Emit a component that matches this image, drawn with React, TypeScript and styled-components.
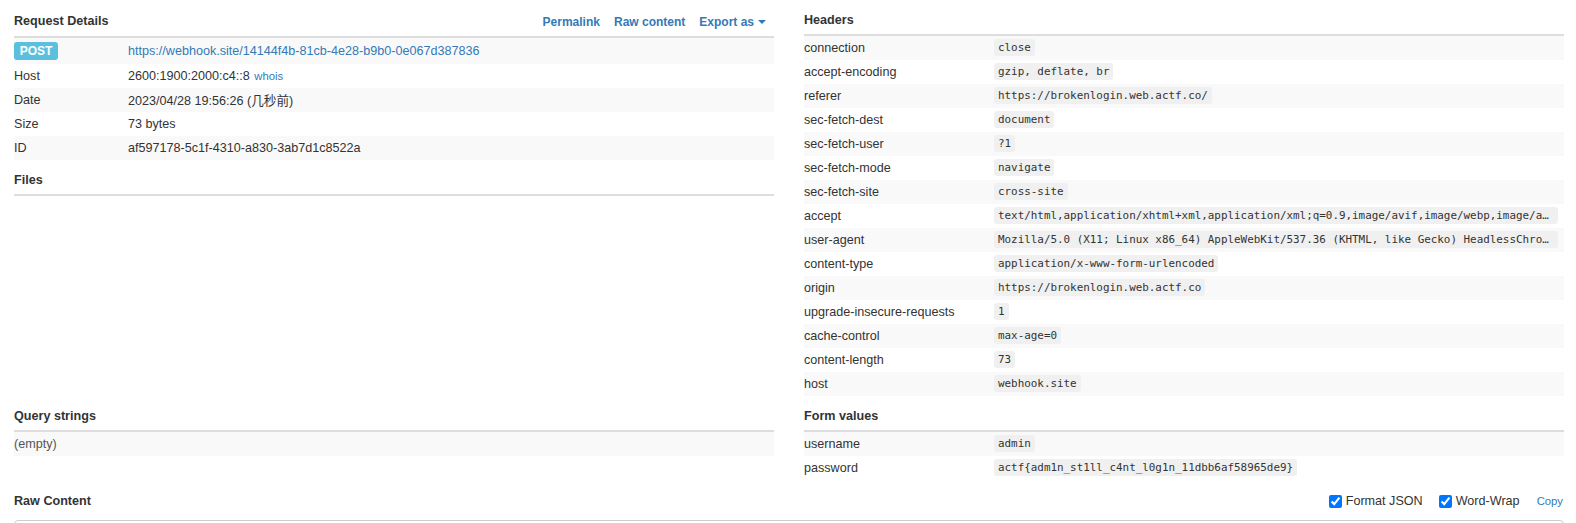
import React from "react"
import styled, { createGlobalStyle } from "styled-components"

const GlobalStyle = createGlobalStyle`
	body {
		margin: 0;
		background: #fff;
		color: #333;
		font-family: "Liberation Sans", Arial, "Noto Sans CJK SC", sans-serif;
		font-size: 12.6px;
	}
`

type Pair = [string, string]

const headers: Pair[] = [
	["connection", "close"],
	["accept-encoding", "gzip, deflate, br"],
	["referer", "https://brokenlogin.web.actf.co/"],
	["sec-fetch-dest", "document"],
	["sec-fetch-user", "?1"],
	["sec-fetch-mode", "navigate"],
	["sec-fetch-site", "cross-site"],
	[
		"accept",
		"text/html,application/xhtml+xml,application/xml;q=0.9,image/avif,image/webp,image/apng,*/*;q=0.8,application/signed-exchange;v=b3;q=0.7",
	],
	[
		"user-agent",
		"Mozilla/5.0 (X11; Linux x86_64) AppleWebKit/537.36 (KHTML, like Gecko) HeadlessChrome/112.0.0.0 Safari/537.36",
	],
	["content-type", "application/x-www-form-urlencoded"],
	["origin", "https://brokenlogin.web.actf.co"],
	["upgrade-insecure-requests", "1"],
	["cache-control", "max-age=0"],
	["content-length", "73"],
	["host", "webhook.site"],
]

const formValues: Pair[] = [
	["username", "admin"],
	["password", "actf{adm1n_st1ll_c4nt_l0g1n_11dbb6af58965de9}"],
]

const App: React.FC = () => {
	return (
		<>
			<GlobalStyle />
			<Page>
				<Column>
					<Heading>
						Request Details
						<Actions>
							<ActionLink href="#">Permalink</ActionLink>
							<ActionLink href="#">Raw content</ActionLink>
							<ActionLink href="#">
								Export as <Caret />
							</ActionLink>
						</Actions>
					</Heading>
					<Table>
						<Row $labelWidth={114} $tall>
							<Label>
								<MethodBadge>POST</MethodBadge>
							</Label>
							<Value>
								<Link href="#">https://webhook.site/14144f4b-81cb-4e28-b9b0-0e067d387836</Link>
							</Value>
						</Row>
						<Row $labelWidth={114}>
							<Label>Host</Label>
							<Value>
								2600:1900:2000:c4::8 <SmallLink href="#">whois</SmallLink>
							</Value>
						</Row>
						<Row $labelWidth={114}>
							<Label>Date</Label>
							<Value>2023/04/28 19:56:26 (几秒前)</Value>
						</Row>
						<Row $labelWidth={114}>
							<Label>Size</Label>
							<Value>73 bytes</Value>
						</Row>
						<Row $labelWidth={114}>
							<Label>ID</Label>
							<Value>af597178-5c1f-4310-a830-3ab7d1c8522a</Value>
						</Row>
					</Table>
					<Heading>Files</Heading>
				</Column>

				<Column>
					<Heading>Headers</Heading>
					<Table>
						{headers.map(([name, value]) => (
							<Row key={name} $labelWidth={190}>
								<Label>{name}</Label>
								<Value>
									<Code>{value}</Code>
								</Value>
							</Row>
						))}
					</Table>
				</Column>

				<Column>
					<Heading>Query strings</Heading>
					<Table>
						<Row $labelWidth={0}>
							<Empty>(empty)</Empty>
						</Row>
					</Table>
				</Column>

				<Column>
					<Heading>Form values</Heading>
					<Table>
						{formValues.map(([name, value]) => (
							<Row key={name} $labelWidth={190}>
								<Label>{name}</Label>
								<Value>
									<Code>{value}</Code>
								</Value>
							</Row>
						))}
					</Table>
				</Column>

				<Wide>
					<RawHeading>
						Raw Content
						<Controls>
							<Check>
								<input type="checkbox" defaultChecked />
								Format JSON
							</Check>
							<Check>
								<input type="checkbox" defaultChecked />
								Word-Wrap
							</Check>
							<SmallLink href="#">Copy</SmallLink>
						</Controls>
					</RawHeading>
					<RawBox />
				</Wide>
			</Page>
		</>
	)
}

const Page = styled.div`
	display: grid;
	grid-template-columns: minmax(0, 1fr) minmax(0, 1fr);
	column-gap: 30px;
	padding: 0 12px 0 14px;
`

const Column = styled.section`
	display: flex;
	flex-direction: column;
	min-width: 0;
`

const Wide = styled.section`
	grid-column: 1 / -1;
`

const Heading = styled.h4`
	display: flex;
	align-items: center;
	margin: 10px 0 0;
	padding-bottom: 4px;
	line-height: 20px;
	font-size: 12.6px;
	font-weight: bold;
	border-bottom: 2px solid #ddd;
`

const RawHeading = styled(Heading)`
	margin-top: 11px;
	padding-bottom: 0;
	border-bottom: none;
`

const Actions = styled.div`
	margin-left: auto;
	display: flex;
	gap: 14px;
	padding-right: 8px;
	padding-top: 2px;
`

const ActionLink = styled.a`
	color: #337ab7;
	text-decoration: none;
	font-size: 12px;
	font-weight: bold;
	display: inline-flex;
	align-items: center;
	gap: 4px;
`

const Caret = styled.span`
	display: inline-block;
	width: 0;
	height: 0;
	border-top: 4px solid #337ab7;
	border-left: 4px solid transparent;
	border-right: 4px solid transparent;
`

const Table = styled.div`
	display: flex;
	flex-direction: column;
`

const Row = styled.div<{ $labelWidth: number; $tall?: boolean }>`
	display: grid;
	grid-template-columns: ${({ $labelWidth }) =>
		$labelWidth ? `${$labelWidth}px minmax(0, 1fr)` : "minmax(0, 1fr)"};
	align-items: center;
	height: ${({ $tall }) => ($tall ? "26px" : "24px")};
	padding-bottom: 1px;
	box-sizing: border-box;
	&:nth-child(odd) {
		background: #f9f9f9;
	}
`

const Label = styled.div`
	white-space: nowrap;
`

const Value = styled.div`
	min-width: 0;
	padding-right: 6px;
	white-space: nowrap;
`

const Empty = styled.div`
	color: #555;
`

const Link = styled.a`
	color: #337ab7;
	text-decoration: none;
`

const SmallLink = styled(Link)`
	font-size: 11.3px;
	font-weight: normal;
	margin-left: 1px;
`

const MethodBadge = styled.span`
	display: inline-block;
	width: 44px;
	height: 18px;
	line-height: 18px;
	text-align: center;
	background: #5bc0de;
	color: #fff;
	font-size: 12px;
	font-weight: bold;
	border-radius: 3px;
	vertical-align: middle;
`

const Code = styled.code`
	display: inline-block;
	max-width: 100%;
	box-sizing: border-box;
	vertical-align: middle;
	overflow: hidden;
	text-overflow: ellipsis;
	white-space: nowrap;
	padding: 2px 4px;
	line-height: 13px;
	font-family: "DejaVu Sans Mono", "Liberation Mono", monospace;
	font-size: 10.9px;
	color: #333;
	background: #f0f0f0;
	border-radius: 3px;
`

const Controls = styled.div`
	margin-left: auto;
	display: flex;
	align-items: center;
	gap: 16px;
	padding-right: 1px;
	font-weight: normal;
`

const Check = styled.label`
	display: inline-flex;
	align-items: center;
	gap: 4px;
	font-size: 12.6px;
	color: #333;
	input {
		margin: 0;
		width: 13px;
		height: 13px;
	}
`

const RawBox = styled.div`
	margin-top: 9px;
	height: 200px;
	border: 1px solid #ccc;
	border-radius: 4px;
`

export default App
